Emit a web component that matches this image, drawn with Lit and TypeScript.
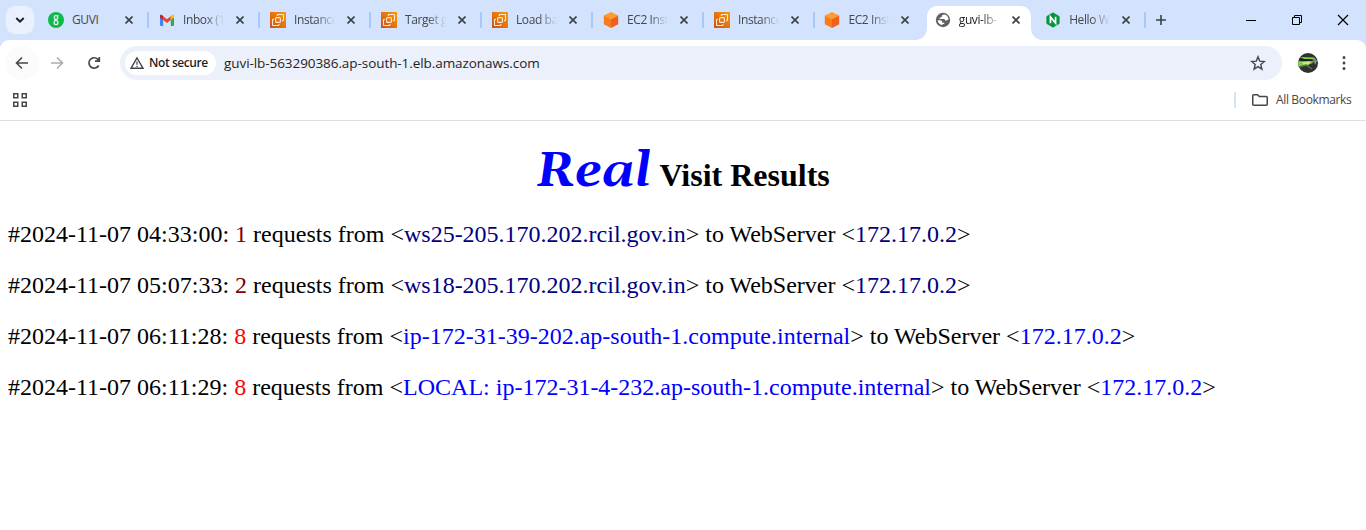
import { LitElement, html, css, svg, TemplateResult } from "lit";
import { customElement, property } from "lit/decorators.js";

type Icon = "guvi" | "gmail" | "aws" | "cube" | "globe" | "nginx";

const favicons: Record<Icon, TemplateResult> = {
  guvi: svg`<circle cx="8" cy="8" r="8" fill="#0fba4b"/><circle cx="8" cy="5.500" r="1.900" fill="none" stroke="#fff" stroke-width="1.100"/><path d="M9.500 4.200l1-.8M7 7.400c-.6.500-.4 1 .3 1.100" fill="none" stroke="#fff" stroke-width="1"/><circle cx="8" cy="10.500" r="2" fill="none" stroke="#fff" stroke-width="1.100"/>`,
  gmail: svg`<path d="M1 4v9q0 1 1 1h2.200V6.600z" fill="#4285f4"/><path d="M11.800 14H14q1 0 1-1V4l-3.200 2.600z" fill="#34a853"/><path d="M1 3.700V5.500l3.200 2.600V4.300L3 3.100C2.200 2.300 1 2.700 1 3.700z" fill="#c5221f"/><path d="M4.200 8.100V4.300L8 7.200l3.800-2.900v3.800L8 11z" fill="#ea4335"/><path d="M11.800 8.100V4.300L13 3.100c.8-.8 2-.4 2 .6v1.800z" fill="#fbbc04"/>`,
  aws: svg`<defs><linearGradient id="o" x1="0" y1="1" x2="1" y2="0"><stop stop-color="#c8511b"/><stop offset="1" stop-color="#f90"/></linearGradient></defs><path d="M0 0h16v16H0z" fill="url(#o)"/><g fill="none" stroke="#ffe9d2" stroke-width="1.100"><rect x="5.600" y="5.600" width="4.800" height="4.800" rx="1"/><path d="M7.300 4V3.300q0-.8.800-.8h4.600q.8 0 .8.800v4.500q0 .8-.8.800H12M9 12v.700q0 .8-.8.800H3.300q-.8 0-.8-.8V8.100q0-.8.800-.8H4"/></g>`,
  cube: svg`<path d="M8 0l7.200 3.500L8 7.500.8 3.500z" fill="#ff9c2a"/><path d="M.8 3.500L8 7.300V16L.8 12.300z" fill="#fa7b1b"/><path d="M15.200 3.500L8 7.300V16l7.200-3.700z" fill="#ee611d"/>`,
  globe: svg`<circle cx="8" cy="8" r="7.200" fill="#5f6368"/><path d="M9.200 2.600c-1.400.1-2.300.8-2.300 1.700 0 .8-.7 1-1.400 1.100-.9.100-1 .7-1 1.500h4.300c1.100 0 1.300.8 1.400 1.500h1.300c.8 0 1-.6 2.100-.8-.1-2.400-1.800-4.700-4.400-5zM2.700 8.300c.1 2.500 2 4.600 4.700 4.900v-1.300h1.800v-1.200H7.300c0-1.600-.9-2.400-2.400-2.400z" fill="#fff"/>`,
  nginx: svg`<path d="M8 .8L14.200 4.400v7.200L8 15.200 1.800 11.600V4.400z" fill="#009639" stroke="#009639" stroke-width=".7" stroke-linejoin="round"/><path d="M5.400 11.300V4.900l5.200 6.200V4.700" fill="none" stroke="#fff" stroke-width="1.700"/>`,
};

@customElement("browser-tab")
class BrowserTab extends LitElement {
  @property() label = "";
  @property() icon: Icon = "globe";
  @property({ type: Boolean }) active = false;
  @property({ type: Boolean }) divided = false;

  static styles = css`
    :host { display: block; flex: 0 0 111px; height: 40px; }
    :host(.narrow) { flex-basis: 110.4px; }
    .tab { margin: 6px 0 0 -8px; padding: 0 0 6px 8px; width: 96px; height: 28px; display: flex; align-items: center; border-radius: 10px 10px 0 0; position: relative; }
    .active { background: #fff; }
    .active::before, .active::after { content: ""; position: absolute; bottom: 0; width: 11px; height: 11px; }
    .active::before { left: -11px; background: radial-gradient(circle at 0 0, transparent 10.500px, #fff 11px); }
    .active::after { right: -11px; background: radial-gradient(circle at 100% 0, transparent 10.500px, #fff 11px); }
    .icon { width: 16px; height: 16px; flex: none; }
    .label { width: 41px; flex: none; margin-left: 8px; white-space: nowrap; font: 12px/18px "Open Sans", sans-serif; letter-spacing: -.4px; color: #45474a; -webkit-mask-image: linear-gradient(90deg, #000 55%, transparent 100%); mask-image: linear-gradient(90deg, #000 55%, transparent 100%); }
    .full { -webkit-mask-image: none; mask-image: none; }
    .active .label { color: #1f1f1f; }
    .close { width: 8px; height: 8px; margin-left: 12px; flex: none; stroke: #3c4043; stroke-width: 1.600; }
    .divider { position: absolute; left: 107px; top: 6px; width: 2px; height: 16px; background: #a8c7fa; border-radius: 1px; }
  `;

  render() {
    return html`<div class="tab ${this.active ? "active" : ""}">
      <svg class="icon" viewBox="0 0 16 16">${favicons[this.icon]}</svg>
      <span class="label ${this.label === "GUVI" ? "full" : ""}">${this.label}</span>
      <svg class="close" viewBox="0 0 8 8"><path d="M0.500 0.500l7 7M7.500 0.500l-7 7"/></svg>
      ${this.divided ? html`<span class="divider"></span>` : ""}
    </div>`;
  }
}

interface Visit { time: string; count: number; countColor: string; from: string; hostColor: string; }

const visits: Visit[] = [
  { time: "2024-11-07 04:33:00", count: 1, countColor: "maroon", from: "ws25-205.170.202.rcil.gov.in", hostColor: "navy" },
  { time: "2024-11-07 05:07:33", count: 2, countColor: "maroon", from: "ws18-205.170.202.rcil.gov.in", hostColor: "navy" },
  { time: "2024-11-07 06:11:28", count: 8, countColor: "red", from: "ip-172-31-39-202.ap-south-1.compute.internal", hostColor: "blue" },
  { time: "2024-11-07 06:11:29", count: 8, countColor: "red", from: "LOCAL: ip-172-31-4-232.ap-south-1.compute.internal", hostColor: "blue" },
];

const tabs: { label: string; icon: Icon }[] = [
  { label: "GUVI", icon: "guvi" },
  { label: "Inbox (1", icon: "gmail" },
  { label: "Instance", icon: "aws" },
  { label: "Target g", icon: "aws" },
  { label: "Load ba", icon: "aws" },
  { label: "EC2 Inst", icon: "cube" },
  { label: "Instance", icon: "aws" },
  { label: "EC2 Inst", icon: "cube" },
  { label: "guvi-lb-", icon: "globe" },
  { label: "Hello W", icon: "nginx" },
];

@customElement("app-root")
class AppRoot extends LitElement {
  static styles = css`
    :host { display: block; height: 530px; overflow: hidden; background: #fff; font-family: "Open Sans", sans-serif; }
    .chrome { background: #d3e3fd; }
    .strip { display: flex; height: 40px; }
    .search { flex: none; width: 28px; height: 28px; margin: 6px 14px 0 6px; border-radius: 9px; background: #e9f1fe; display: flex; align-items: center; justify-content: center; }
    .plus { width: 12px; height: 12px; margin: 14px 0 0 -1px; flex: none; }
    .window { display: flex; margin: 14px 17px 0 auto; gap: 34px; }
    svg { display: block; flex: none; fill: none; }
    .toolbar { height: 46px; background: #fff; border-radius: 9px 9px 0 0; display: flex; align-items: center; }
    .back { width: 34px; height: 34px; border-radius: 50%; background: #fbfbfb; margin-left: 5px; display: flex; align-items: center; justify-content: center; }
    .forward { margin-left: 11px; }
    .reload { margin-left: 21px; }
    .omnibox { margin-left: 17px; width: 1162px; height: 34px; border-radius: 17px; background: #ecf0fa; box-sizing: border-box; padding: 0 16px 0 5px; display: flex; align-items: center; }
    .chip { width: 91px; height: 24px; border-radius: 12px; background: #fff; box-sizing: border-box; padding-left: 4px; display: flex; align-items: center; gap: 4px; font: 600 12px/18px "Open Sans", sans-serif; letter-spacing: -.42px; color: #1f1f1f; white-space: nowrap; }
    .url { margin-left: 8px; flex: 1; font-size: 13.5px; line-height: 18px; letter-spacing: -.07px; color: #1f1f1f; white-space: nowrap; }
    .avatar { margin-left: 16px; }
    .menu { margin-left: 24px; }
    .bookmarks { height: 28px; background: #fff; display: flex; align-items: center; padding: 0 15px 6px 13px; border-bottom: 1px solid #dedfe1; }
    .rule { width: 2px; height: 16px; background: #d3e3fd; margin-left: auto; }
    .all { margin-left: 8px; font-size: 12px; line-height: 18px; letter-spacing: -.35px; color: #45474a; white-space: nowrap; width: 75px; }
    .folder { margin-left: 16px; }
    .page { padding: 0 8px; font: 24px/27px "Liberation Serif", serif; color: #000; }
    h1 { margin: 0; height: 100px; box-sizing: border-box; padding-top: 21px; text-align: center; font-size: 32px; line-height: 60px; white-space: nowrap; }
    .real { font: italic 700 48px/60px Gelasio, Georgia, "DejaVu Serif Condensed", "DejaVu Serif", serif; letter-spacing: .5px; color: #00f; }
    .row { margin: 0 0 24px; white-space: nowrap; }
  `;

  render() {
    return html`
      <div class="chrome">
        <div class="strip">
          <div class="search"><svg width="10" height="8" viewBox="0 0 10 8"><path d="M1.300 2l3.700 3.700L8.700 2" stroke="#1f1f1f" stroke-width="2"/></svg></div>
          ${tabs.map((t, i) => html`<browser-tab class=${i > 5 ? "narrow" : ""} .label=${t.label} .icon=${t.icon} .active=${i === 8} .divided=${i !== 7 && i !== 8}></browser-tab>`)}
          <svg class="plus" viewBox="0 0 12 12"><path d="M6 1v10M1 6h10" stroke="#3c4043" stroke-width="1.600"/></svg>
          <div class="window">
            <svg width="12" height="12" viewBox="0 0 12 12"><path d="M1 6.500h10" stroke="#000"/></svg>
            <svg width="12" height="12" viewBox="0 0 12 12"><path d="M1.500 3.500h7v7h-7zM3.500 3.500v-2h7v7h-2" stroke="#000"/></svg>
            <svg width="12" height="12" viewBox="0 0 12 12"><path d="M1 1l10 10M11 1L1 11" stroke="#000" stroke-width="1.200"/></svg>
          </div>
        </div>
        <div class="toolbar">
          <div class="back"><svg width="14" height="14" viewBox="0 0 14 14"><path d="M13 7H2M7 1.500L1.500 7 7 12.500" stroke="#45474a" stroke-width="1.600"/></svg></div>
          <svg class="forward" width="14" height="14" viewBox="0 0 14 14"><path d="M1 7h11M7 1.500L12.500 7 7 12.500" stroke="#adadae" stroke-width="1.600"/></svg>
          <svg class="reload" width="18" height="18" viewBox="0 0 18 18"><path d="M13.700 11.500a5.200 5.200 0 1 1-.8-6.200L14.300 7M14.300 3v4.200H10" stroke="#45474a" stroke-width="1.700"/></svg>
          <div class="omnibox">
            <div class="chip"><svg width="16" height="16" viewBox="0 0 16 16"><path d="M8 3l6 10.200H2z" stroke="#3c4043" stroke-width="1.400"/><path d="M8 6.500v3.200M8 10.700v1.300" stroke="#3c4043" stroke-width="1.200"/></svg><span>Not secure</span></div>
            <span class="url">guvi-lb-563290386.ap-south-1.elb.amazonaws.com</span>
            <svg width="16" height="16" viewBox="0 0 16 16"><path d="M8 1.800l1.700 4.300 4.700.4-3.600 3 1.100 4.600L8 11.600l-3.900 2.500 1.100-4.600-3.600-3 4.700-.4z" stroke="#45474a" stroke-width="1.400"/></svg>
          </div>
          <svg class="avatar" width="20" height="20" viewBox="0 0 20 20"><defs><clipPath id="a"><circle cx="10" cy="10" r="10"/></clipPath></defs><g clip-path="url(#a)"><path d="M0 0h20v20H0z" fill="#2d332f"/><path d="M2 4l14 .5 2 2-12-.5zM0 8l13 1-2 3-11 2z" fill="#83d636"/><path d="M4 9l8-1 3 2-9 2z" fill="#bced88"/><path d="M2 6.500l16 1" stroke="#172018" stroke-width="1.500"/><path d="M12 9l6-1-1 3" stroke="#b78563" stroke-width="1.500"/><path d="M15 6l4 2" stroke="#668fb0" stroke-width="1.500"/><path d="M1 14l7-2 6 4" stroke="#616a63" stroke-width="1.500"/></g></svg>
          <svg class="menu" width="4" height="16" viewBox="0 0 4 16"><path d="M2 1a1.500 1.500 0 1 1 0 3 1.500 1.500 0 0 1 0-3zm0 5.500a1.500 1.500 0 1 1 0 3 1.500 1.500 0 0 1 0-3zM2 12a1.500 1.500 0 1 1 0 3 1.500 1.500 0 0 1 0-3z" fill="#45474a"/></svg>
        </div>
        <div class="bookmarks">
          <svg width="14" height="14" viewBox="0 0 14 14"><path d="M.750.750h4v4h-4zm8.500 0h4v4h-4zm-8.500 8.500h4v4h-4zm8.500 0h4v4h-4z" stroke="#45474a" stroke-width="1.500"/></svg>
          <span class="rule"></span>
          <svg class="folder" width="16" height="12" viewBox="0 0 16 12"><path d="M.750 1.500q0-.750.750-.750h4l1.800 1.700h7q.950 0 .950.900v7q0 .900-.900.900H1.700q-.950 0-.950-.900z" stroke="#45474a" stroke-width="1.500"/></svg>
          <span class="all">All Bookmarks</span>
        </div>
      </div>
      <main class="page">
        <h1><span class="real">Real</span> Visit Results</h1>
        ${visits.map((v) => html`<p class="row">#${v.time}: <span style="color:${v.countColor}">${v.count}</span> requests from &lt;<span style="color:${v.hostColor}">${v.from}</span>&gt; to WebServer &lt;<span style="color:${v.hostColor}">172.17.0.2</span>&gt;</p>`)}
      </main>
    `;
  }
}
